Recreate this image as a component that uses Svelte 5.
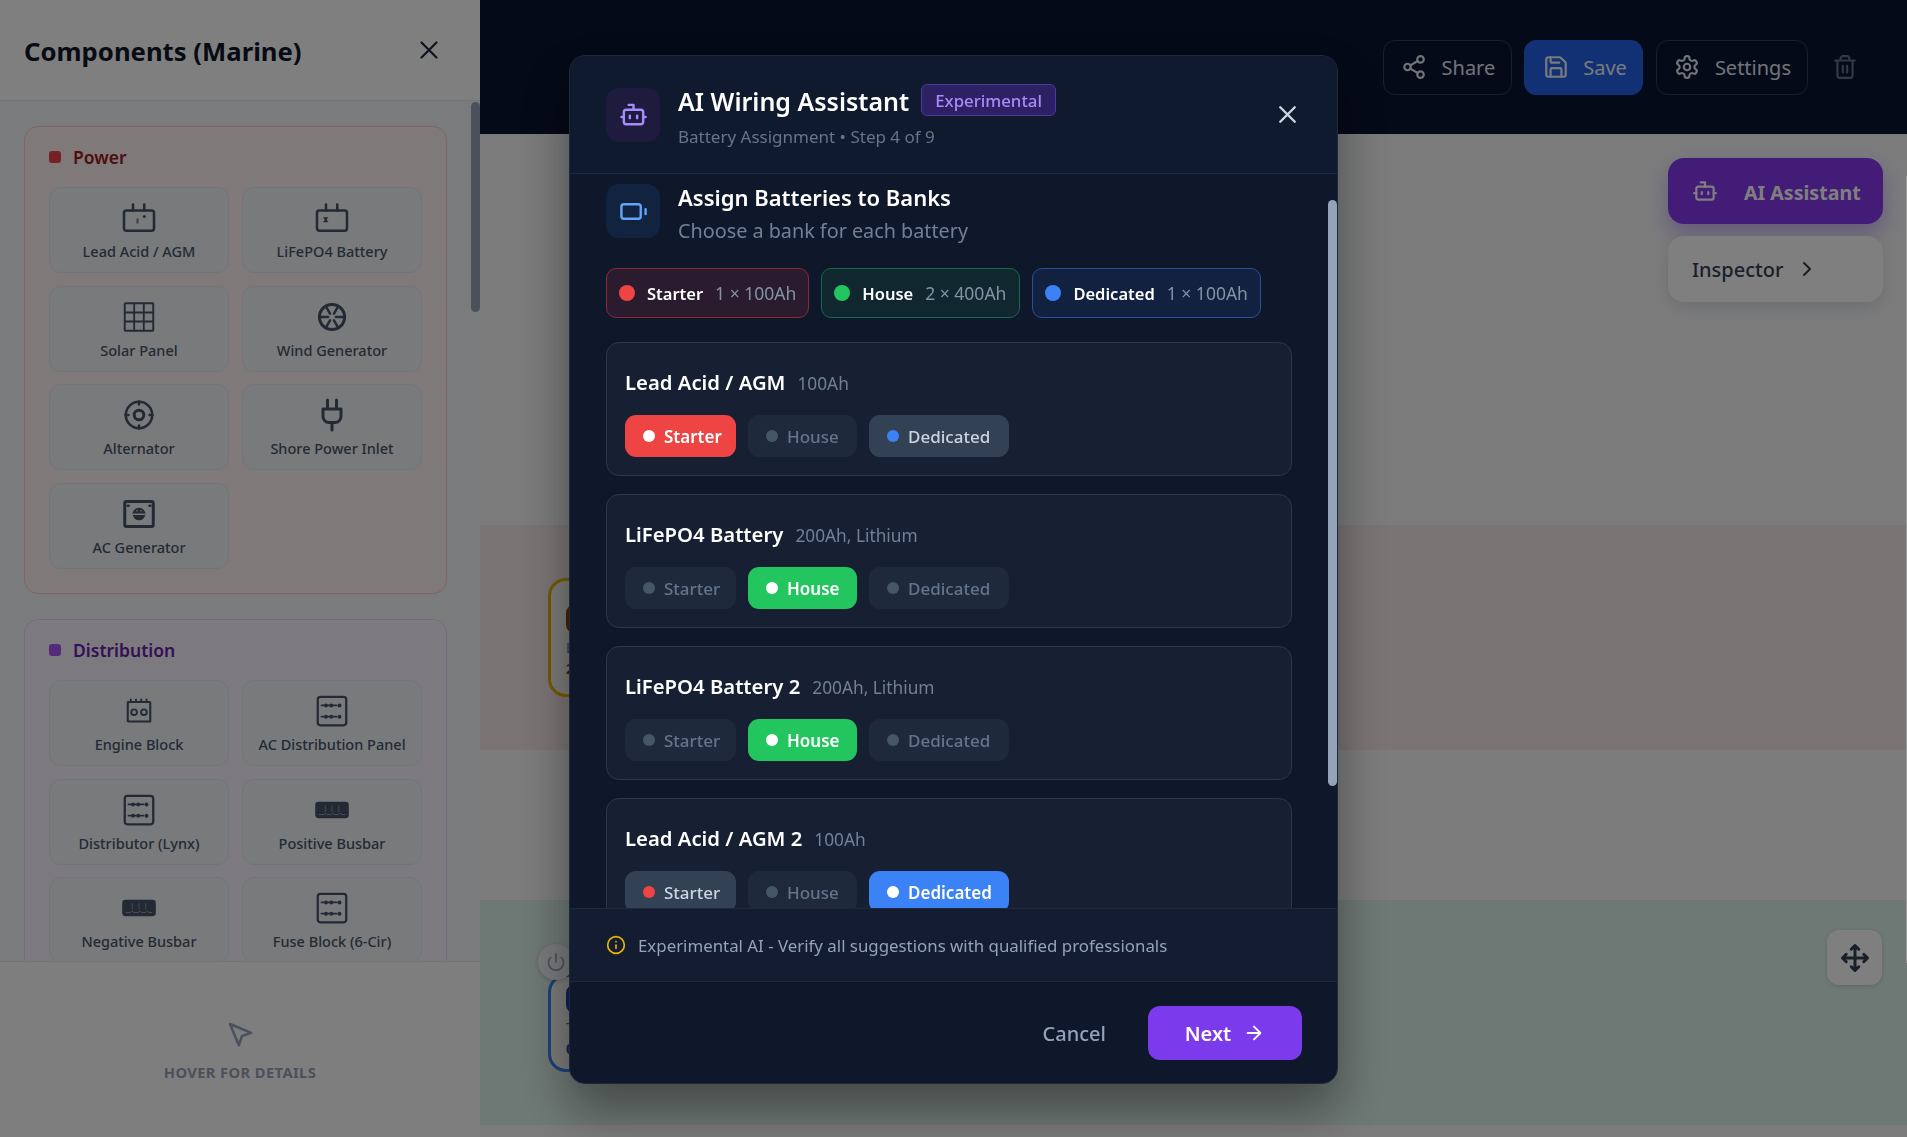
<script lang="ts">
    const power = [
        { name: 'Lead Acid / AGM', icon: 'lead' },
        { name: 'LiFePO4 Battery', icon: 'lifepo' },
        { name: 'Solar Panel', icon: 'solar' },
        { name: 'Wind Generator', icon: 'wind' },
        { name: 'Alternator', icon: 'alternator' },
        { name: 'Shore Power Inlet', icon: 'plug' },
        { name: 'AC Generator', icon: 'acgen' }
    ];
    const distribution = [
        { name: 'Engine Block', icon: 'engine' },
        { name: 'AC Distribution Panel', icon: 'panel' },
        { name: 'Distributor (Lynx)', icon: 'panel' },
        { name: 'Positive Busbar', icon: 'busbar' },
        { name: 'Negative Busbar', icon: 'busbar' },
        { name: 'Fuse Block (6-Cir)', icon: 'panel' }
    ];
    const groups = [
        { title: 'Power', tone: 'red', items: power },
        { title: 'Distribution', tone: 'purple', items: distribution }
    ];
    const summary = [
        { bank: 'starter', label: 'Starter', value: '1 × 100Ah' },
        { bank: 'house', label: 'House', value: '2 × 400Ah' },
        { bank: 'dedicated', label: 'Dedicated', value: '1 × 100Ah' }
    ];
    // "soft" is a bank that can still take this battery, the rest are greyed out
    const batteries = [
        { name: 'Lead Acid / AGM', meta: '100Ah', picked: 'starter', soft: ['dedicated'] },
        { name: 'LiFePO4 Battery', meta: '200Ah, Lithium', picked: 'house', soft: [] },
        { name: 'LiFePO4 Battery 2', meta: '200Ah, Lithium', picked: 'house', soft: [] },
        { name: 'Lead Acid / AGM 2', meta: '100Ah', picked: 'dedicated', soft: ['starter'] }
    ];
    const wheel = [0, 60, 120, 180, 240, 300];
</script>

{#snippet tileIcon(icon: string)}
    <svg class="tile-icon" viewBox="0 0 24 24" fill="none" stroke="currentColor" stroke-width="1.7" stroke-linecap="round" stroke-linejoin="round">
        {#if icon === 'lead'}
            <rect x="2" y="7" width="20" height="13.5" rx="1.6" />
            <path d="M8 7V3M15.5 7V3" />
            <circle cx="15.5" cy="11" r="1" fill="currentColor" stroke="none" />
            <path d="M11 13v2" opacity="0.6" />
        {:else if icon === 'lifepo'}
            <rect x="2" y="7" width="20" height="13.5" rx="1.6" />
            <path d="M8 7V3M15.5 7V3" />
            <path d="M6 11.5h3.6l-1.2 1.7 1.2 1.7H6l1.2-1.7z" fill="currentColor" stroke="none" />
        {:else if icon === 'solar'}
            <rect x="2.5" y="2.8" width="19" height="18.4" rx="0.6" stroke-width="1.3" />
            <path d="M8.8 3v18M15.2 3v18M3 9h18M3 15h18" stroke-width="1.2" />
        {:else if icon === 'wind'}
            <circle cx="12" cy="12" r="8.4" stroke-width="2" />
            {#each wheel as angle}
                <path d="M12 9.4V4" transform="rotate({angle + 30} 12 12)" stroke-width="1.6" />
            {/each}
        {:else if icon === 'alternator'}
            <circle cx="12" cy="12" r="8.8" />
            <circle cx="12" cy="12" r="3.2" stroke-width="2" />
            <path d="M12 3v2M12 19v2M3 12h2M19 12h2" />
        {:else if icon === 'plug'}
            <path d="M12 22v-5M9 8V2M15 8V2M18 8v5a4 4 0 0 1-4 4h-4a4 4 0 0 1-4-4V8Z" stroke-width="2" />
        {:else if icon === 'acgen'}
            <rect x="2.5" y="3.6" width="19" height="16.8" rx="1.2" stroke-width="2" />
            <circle cx="12" cy="12" r="4.2" fill="currentColor" stroke="none" />
            <path d="M8.4 12.2h7.2M10.6 9.8h.01M13.4 9.8h.01" stroke="#f1f5f9" stroke-width="1" />
            <path d="M4.5 6.5h.6M19 6.5h.6" />
        {:else if icon === 'engine'}
            <rect x="4.5" y="6" width="15" height="13" rx="0.4" stroke-width="1.4" />
            <path d="M6.5 6V4.2M10 6V4.2M13.5 6V4.2M17 6V4.2" stroke-width="1.2" />
            <circle cx="8.7" cy="12.8" r="1.9" stroke-width="1.3" />
            <circle cx="15.3" cy="12.8" r="1.9" stroke-width="1.3" />
        {:else if icon === 'panel'}
            <rect x="2.5" y="2.5" width="19" height="19" rx="1.8" stroke-width="1.5" />
            <path d="M5 8.3h10M5 15.8h10" stroke-width="1.2" />
            <circle cx="8" cy="8.3" r="1.3" fill="currentColor" stroke="none" />
            <circle cx="11.5" cy="8.3" r="1.3" fill="currentColor" stroke="none" />
            <circle cx="17" cy="8.3" r="1.3" fill="currentColor" stroke="none" />
            <circle cx="8" cy="15.8" r="1.3" fill="currentColor" stroke="none" />
            <circle cx="11.5" cy="15.8" r="1.3" fill="currentColor" stroke="none" />
            <circle cx="17" cy="15.8" r="1.3" fill="currentColor" stroke="none" />
        {:else if icon === 'busbar'}
            <rect x="1.5" y="7.2" width="21" height="9.6" rx="1.4" stroke-width="1.4" fill="currentColor" />
            <path d="M3.5 15h3l1-1 1 1h3l1-1 1 1h3l1-1 1 1h2" stroke="#94a3b8" stroke-width="0.6" />
            <path d="M7.5 9v4M12 9v4M16.5 9v4" stroke="#94a3b8" stroke-width="0.5" />
        {/if}
    </svg>
{/snippet}

{#snippet bot()}
    <path d="M12 8V4H8" /><rect x="4" y="8" width="16" height="12" rx="2" /><path d="M2 14h2M20 14h2M15 13v2M9 13v2" />
{/snippet}

<div class="page">
    <aside class="sidebar">
        <header class="side-head">
            <h2>Components (Marine)</h2>
            <svg class="side-close" viewBox="0 0 24 24" fill="none" stroke="currentColor" stroke-width="1.8" stroke-linecap="round"><path d="M18 6 6 18M6 6l12 12" /></svg>
        </header>
        <div class="side-body">
            {#each groups as group}
                <section class="group {group.tone}">
                    <h3><span class="group-dot"></span>{group.title}</h3>
                    <div class="tiles">
                        {#each group.items as item}
                            <div class="tile">
                                {@render tileIcon(item.icon)}
                                <span>{item.name}</span>
                            </div>
                        {/each}
                    </div>
                </section>
            {/each}
            <div class="side-thumb"></div>
        </div>
        <div class="side-foot">
            <svg viewBox="0 0 24 24" fill="none" stroke="currentColor" stroke-width="2" stroke-linecap="round" stroke-linejoin="round"><path d="m4 4 7.07 17 2.51-7.39L21 11.07z" /></svg>
            <span>HOVER FOR DETAILS</span>
        </div>
    </aside>

    <main class="main">
        <div class="topbar">
            <button class="tool">
                <svg viewBox="0 0 24 24"><circle cx="18" cy="5" r="3" /><circle cx="6" cy="12" r="3" /><circle cx="18" cy="19" r="3" /><path d="m8.59 13.51 6.83 3.98M15.41 6.51l-6.82 3.98" /></svg>
                Share
            </button>
            <button class="tool save">
                <svg viewBox="0 0 24 24"><path d="M15.2 3a2 2 0 0 1 1.4.6l3.8 3.8a2 2 0 0 1 .6 1.4V19a2 2 0 0 1-2 2H5a2 2 0 0 1-2-2V5a2 2 0 0 1 2-2z" /><path d="M17 21v-7a1 1 0 0 0-1-1H8a1 1 0 0 0-1 1v7M7 3v4a1 1 0 0 0 1 1h7" /></svg>
                Save
            </button>
            <button class="tool">
                <svg viewBox="0 0 24 24"><path d="M12.22 2h-.44a2 2 0 0 0-2 2v.18a2 2 0 0 1-1 1.73l-.43.25a2 2 0 0 1-2 0l-.15-.08a2 2 0 0 0-2.73.73l-.22.38a2 2 0 0 0 .73 2.73l.15.1a2 2 0 0 1 1 1.72v.51a2 2 0 0 1-1 1.74l-.15.09a2 2 0 0 0-.73 2.73l.22.38a2 2 0 0 0 2.73.73l.15-.08a2 2 0 0 1 2 0l.43.25a2 2 0 0 1 1 1.73V20a2 2 0 0 0 2 2h.44a2 2 0 0 0 2-2v-.18a2 2 0 0 1 1-1.73l.43-.25a2 2 0 0 1 2 0l.15.08a2 2 0 0 0 2.73-.73l.22-.39a2 2 0 0 0-.73-2.73l-.15-.08a2 2 0 0 1-1-1.74v-.5a2 2 0 0 1 1-1.74l.15-.09a2 2 0 0 0 .73-2.73l-.22-.38a2 2 0 0 0-2.73-.73l-.15.08a2 2 0 0 1-2 0l-.43-.25a2 2 0 0 1-1-1.73V4a2 2 0 0 0-2-2z" /><circle cx="12" cy="12" r="3" /></svg>
                Settings
            </button>
            <svg class="trash" viewBox="0 0 24 24" fill="none" stroke="currentColor" stroke-width="2" stroke-linecap="round" stroke-linejoin="round"><path d="M3 6h18M19 6v14c0 1-1 2-2 2H7c-1 0-2-1-2-2V6M8 6V4c0-1 1-2 2-2h4c1 0 2 1 2 2v2M10 11v6M14 11v6" /></svg>
        </div>

        <div class="canvas">
            <div class="band top"></div>
            <div class="band red"></div>
            <div class="band mid"></div>
            <div class="band green"></div>
            <div class="band bottom"></div>

            <div class="node gold">
                <div class="node-icon"></div>
                <small>LiFePO4</small>
                <b>200Ah</b>
            </div>
            <div class="node blue">
                <div class="node-icon"></div>
                <small>Total</small>
                <b>0.0A</b>
            </div>
            <div class="node-power">
                <svg viewBox="0 0 24 24" fill="none" stroke="currentColor" stroke-width="2" stroke-linecap="round"><path d="M12 2v10M18.4 6.6a9 9 0 1 1-12.77.04" /></svg>
            </div>

            <div class="float-col">
                <button class="float ai">
                    <svg viewBox="0 0 24 24" fill="none" stroke="currentColor" stroke-width="2" stroke-linecap="round" stroke-linejoin="round">{@render bot()}</svg>
                    AI Assistant
                </button>
                <button class="float inspector">
                    Inspector
                    <svg viewBox="0 0 24 24" fill="none" stroke="currentColor" stroke-width="2" stroke-linecap="round" stroke-linejoin="round"><path d="m9 18 6-6-6-6" /></svg>
                </button>
            </div>
            <div class="move">
                <svg viewBox="0 0 24 24" fill="none" stroke="currentColor" stroke-width="2.4" stroke-linecap="round" stroke-linejoin="round"><path d="M12 2v20M15 19l-3 3-3-3M19 9l3 3-3 3M2 12h20M5 9l-3 3 3 3M9 5l3-3 3 3" /></svg>
            </div>
        </div>
    </main>

    <div class="overlay">
        <div class="modal">
            <header class="modal-head">
                <div class="icon-box violet">
                    <svg viewBox="0 0 24 24" fill="none" stroke="currentColor" stroke-width="2" stroke-linecap="round" stroke-linejoin="round">{@render bot()}</svg>
                </div>
                <div class="head-text">
                    <div class="head-title">
                        <h1>AI Wiring Assistant</h1>
                        <span class="badge">Experimental</span>
                    </div>
                    <p>Battery Assignment • Step 4 of 9</p>
                </div>
                <svg class="modal-close" viewBox="0 0 24 24" fill="none" stroke="currentColor" stroke-width="2" stroke-linecap="round"><path d="M18 6 6 18M6 6l12 12" /></svg>
            </header>

            <div class="modal-body">
                <div class="step-head">
                    <div class="icon-box blue">
                        <svg viewBox="0 0 24 24" fill="none" stroke="currentColor" stroke-width="2" stroke-linecap="round" stroke-linejoin="round"><rect x="2" y="6" width="16" height="12" rx="2" /><path d="M22 14v-4" /></svg>
                    </div>
                    <div class="step-text">
                        <h2>Assign Batteries to Banks</h2>
                        <p>Choose a bank for each battery</p>
                    </div>
                </div>

                <div class="summary">
                    {#each summary as s}
                        <div class="pill {s.bank}">
                            <span class="pill-dot"></span>
                            <strong>{s.label}</strong>
                            <span class="pill-value">{s.value}</span>
                        </div>
                    {/each}
                </div>

                <div class="cards">
                    {#each batteries as b}
                        <div class="card">
                            <div class="card-title"><strong>{b.name}</strong><span>{b.meta}</span></div>
                            <div class="bank-row">
                                {#each summary as s}
                                    <button class="bank {s.bank}" class:picked={b.picked === s.bank} class:soft={b.soft.includes(s.bank)}>
                                        <span class="bank-dot"></span>
                                        {s.label}
                                    </button>
                                {/each}
                            </div>
                        </div>
                    {/each}
                </div>
                <div class="body-thumb"></div>
            </div>

            <div class="note">
                <svg viewBox="0 0 24 24" fill="none" stroke="currentColor" stroke-width="2" stroke-linecap="round"><circle cx="12" cy="12" r="10" /><path d="M12 16v-4M12 8h.01" /></svg>
                Experimental AI - Verify all suggestions with qualified professionals
            </div>

            <footer class="modal-foot">
                <button class="cancel">Cancel</button>
                <button class="next">
                    Next
                    <svg viewBox="0 0 24 24" fill="none" stroke="currentColor" stroke-width="2" stroke-linecap="round" stroke-linejoin="round"><path d="M5 12h14M12 5l7 7-7 7" /></svg>
                </button>
            </footer>
        </div>
        <div class="edge"></div>
    </div>
</div>

<style>
    :global(body) {
        font-family: "Noto Sans", "Open Sans", sans-serif;
    }
    button {
        font-family: inherit;
        border: none;
        padding: 0;
        cursor: pointer;
    }
    h1, h2, h3, p {
        margin: 0;
    }
    .page {
        position: relative;
        display: flex;
        width: 100%;
        height: 100vh;
        overflow: hidden;
        font-family: "Noto Sans", "Open Sans", sans-serif;
    }

    /* sidebar */
    .sidebar {
        width: 480px;
        flex: none;
        display: flex;
        flex-direction: column;
        background: #fff;
    }
    .side-head {
        height: 101px;
        flex: none;
        box-sizing: border-box;
        display: flex;
        align-items: center;
        justify-content: space-between;
        padding: 0 36px 0 24px;
        border-bottom: 1px solid #e2e8f0;
    }
    .side-head h2 {
        font-size: 25.7px;
        font-weight: 700;
        color: #0f172a;
        margin-top: 2px;
    }
    .side-close {
        width: 30px;
        height: 30px;
        color: #1e293b;
    }
    .side-body {
        position: relative;
        flex: 1;
        min-height: 0;
        overflow: hidden;
        background: #f5f7fa;
        padding: 25px 33px 0 24px;
        display: flex;
        flex-direction: column;
        gap: 25px;
    }
    .side-thumb {
        position: absolute;
        top: 1px;
        right: 0;
        width: 9px;
        height: 210px;
        border-radius: 5px;
        background: #94a3b8;
    }
    .group {
        flex: none;
        border-radius: 14px;
        padding: 19px 24px 24px;
        border: 1px solid;
    }
    .group.red {
        background: #fef2f2;
        border-color: #fecaca;
        color: #991b1b;
    }
    .group.purple {
        background: #faf5ff;
        border-color: #e9d5ff;
        color: #6b21a8;
    }
    .group h3 {
        display: flex;
        align-items: center;
        gap: 12px;
        font-size: 17.5px;
        font-weight: 600;
        line-height: 22px;
        margin-bottom: 19px;
    }
    .group-dot {
        width: 12px;
        height: 12px;
        border-radius: 3px;
    }
    .red .group-dot {
        background: #ef4444;
    }
    .purple .group-dot {
        background: #a855f7;
    }
    .tiles {
        display: grid;
        grid-template-columns: 180px 180px;
        column-gap: 13px;
        row-gap: 12.7px;
        grid-auto-rows: 86px;
    }
    .tile {
        box-sizing: border-box;
        display: flex;
        flex-direction: column;
        align-items: center;
        padding-top: 12px;
        gap: 5px;
        background: #f1f5f9;
        border: 1px solid #e2e8f0;
        border-radius: 12px;
        color: #475569;
    }
    .tile span {
        font-size: 14.5px;
        line-height: 20px;
        font-weight: 500;
    }
    .tile-icon {
        width: 36px;
        height: 36px;
    }
    .side-foot {
        height: 176px;
        flex: none;
        box-sizing: border-box;
        border-top: 1px solid #e2e8f0;
        background: #fcfcfd;
        display: flex;
        flex-direction: column;
        align-items: center;
        padding-top: 57px;
        gap: 13px;
        color: #94a3b8;
    }
    .side-foot svg {
        width: 30px;
        height: 30px;
    }
    .side-foot span {
        font-size: 14.7px;
        font-weight: 700;
        letter-spacing: 0.4px;
    }

    /* toolbar + canvas */
    .main {
        flex: 1;
        min-width: 0;
        display: flex;
        flex-direction: column;
    }
    .topbar {
        height: 134px;
        flex: none;
        box-sizing: border-box;
        background: #0a1430;
        display: flex;
        align-items: center;
        justify-content: flex-end;
        gap: 12.5px;
        padding: 0 49px 0 0;
    }
    .tool {
        height: 55px;
        display: flex;
        align-items: center;
        gap: 14.5px;
        padding: 0 15.5px 0 17.5px;
        background: transparent;
        border: 1px solid #334155;
        border-radius: 12px;
        color: #e2e8f0;
        font-size: 20px;
    }
    .tool.save {
        background: #2563eb;
        border-color: #2563eb;
        color: #f1f5f9;
    }
    .tool svg {
        width: 26px;
        height: 26px;
        fill: none;
        stroke: currentColor;
        stroke-width: 2;
        stroke-linecap: round;
        stroke-linejoin: round;
    }
    .trash {
        width: 26px;
        height: 26px;
        margin-left: 12px;
        color: #64748b;
    }
    .canvas {
        position: relative;
        flex: 1;
        min-height: 0;
        display: flex;
        flex-direction: column;
        background: #f7f8fa;
    }
    .band.top {
        height: 391px;
        background: #f6f7f9;
    }
    .band.red {
        height: 225px;
        background: #f6e9e9;
    }
    .band.mid {
        height: 150px;
        background: #f8f9fb;
    }
    .band.green {
        height: 225px;
        background: #dcf0ea;
    }
    .band.bottom {
        flex: 1;
        background: #f6f7f9;
    }
    .node {
        position: absolute;
        left: 68px;
        width: 150px;
        box-sizing: border-box;
        padding: 24px 0 0 15px;
        border: 3px solid;
        border-radius: 18px;
        background: #f8f8f6;
        display: flex;
        flex-direction: column;
    }
    .node.gold {
        top: 444px;
        height: 119px;
        border-color: #eab308;
        color: #92400e;
    }
    .node.blue {
        top: 840px;
        height: 98px;
        padding-top: 8px;
        border-color: #3b82f6;
        color: #1e40af;
    }
    .node-icon {
        width: 28px;
        height: 28px;
        border: 4px solid currentColor;
        border-radius: 8px;
        box-sizing: border-box;
    }
    .node small {
        font-size: 14px;
        margin-top: 5px;
        color: #64748b;
    }
    .node b {
        font-size: 14px;
        margin-top: 2px;
    }
    .node-power {
        position: absolute;
        left: 58px;
        top: 810px;
        width: 36px;
        height: 36px;
        border-radius: 50%;
        background: #f1f5f9;
        box-shadow: 0 1px 4px rgba(0, 0, 0, 0.2);
        display: flex;
        align-items: center;
        justify-content: center;
        color: #94a3b8;
    }
    .node-power svg {
        width: 20px;
        height: 20px;
    }
    .float-col {
        position: absolute;
        right: 24px;
        top: 24px;
        width: 215px;
        display: flex;
        flex-direction: column;
        gap: 12px;
    }
    .float {
        height: 66px;
        border-radius: 16px;
        display: flex;
        align-items: center;
        font-size: 20px;
    }
    .float.ai {
        padding: 2px 0 0 24px;
        gap: 26px;
        background: #8639f0;
        color: #fff;
        font-size: 19.6px;
        font-weight: 700;
        box-shadow: 0 10px 20px rgba(124, 58, 237, 0.35);
    }
    .float.ai svg {
        width: 26px;
        height: 26px;
        margin-top: -2px;
    }
    .float.inspector {
        padding: 0 0 0 24px;
        gap: 12px;
        background: #fff;
        color: #334155;
        font-weight: 500;
        box-shadow: 0 6px 16px rgba(0, 0, 0, 0.1);
    }
    .float.inspector svg {
        width: 24px;
        height: 24px;
    }
    .move {
        position: absolute;
        right: 25px;
        top: 796px;
        width: 55px;
        height: 55px;
        border-radius: 12px;
        background: #fff;
        box-shadow: 0 1px 4px rgba(0, 0, 0, 0.15);
        display: flex;
        align-items: center;
        justify-content: center;
        color: #334155;
    }
    .move svg {
        width: 30px;
        height: 30px;
    }

    /* modal */
    .overlay {
        position: absolute;
        inset: 0;
        background: rgba(0, 0, 0, 0.5);
        backdrop-filter: blur(0.5px);
        display: flex;
        align-items: center;
        justify-content: center;
    }
    .edge {
        position: absolute;
        right: 0;
        top: 176px;
        width: 1px;
        height: 787px;
        background: #9a9a9a;
    }
    .modal {
        width: 769px;
        height: 1029px;
        margin-top: 2px;
        box-sizing: border-box;
        display: flex;
        flex-direction: column;
        background: #0f172a;
        border: 1px solid #1e293b;
        border-radius: 16px;
        overflow: hidden;
        box-shadow: 0 25px 50px rgba(0, 0, 0, 0.4);
    }
    .modal-head {
        flex: none;
        height: 118px;
        box-sizing: border-box;
        display: flex;
        align-items: center;
        padding: 0 35.5px 0 36px;
        gap: 18px;
        border-bottom: 1px solid #1e293b;
        background: #0f1a2e;
    }
    .icon-box {
        width: 54px;
        height: 54px;
        flex: none;
        border-radius: 13px;
        display: flex;
        align-items: center;
        justify-content: center;
    }
    .icon-box svg {
        width: 29px;
        height: 29px;
    }
    .icon-box.violet {
        background: #1e1b3f;
        color: #a78bfa;
    }
    .icon-box.blue {
        background: #12233f;
        color: #60a5fa;
    }
    .head-text {
        flex: 1;
        margin-top: 3px;
    }
    .head-title {
        display: flex;
        align-items: center;
        gap: 12px;
    }
    .head-title h1 {
        font-size: 25px;
        font-weight: 600;
        color: #fff;
        line-height: 34px;
    }
    .badge {
        box-sizing: border-box;
        height: 32px;
        margin-top: -2px;
        padding: 0 13px;
        display: flex;
        align-items: center;
        font-size: 16.8px;
        font-weight: 500;
        color: #a78bfa;
        background: #2e2163;
        border: 1px solid #4c3a9c;
        border-radius: 6px;
    }
    .head-text p {
        font-size: 17px;
        color: #64748b;
        margin-top: 7px;
    }
    .modal-close {
        width: 29px;
        height: 29px;
        color: #cbd5e1;
    }
    .modal-body {
        position: relative;
        flex: 1;
        min-height: 0;
        overflow: hidden;
        padding: 10px 45px 0 36px;
    }
    .body-thumb {
        position: absolute;
        right: 0;
        top: 26px;
        width: 9px;
        height: 586px;
        border-radius: 5px;
        background: #94a3b8;
    }
    .step-head {
        display: flex;
        gap: 18px;
        align-items: flex-start;
    }
    .step-text {
        margin-top: -2px;
    }
    .step-head h2 {
        font-size: 22px;
        font-weight: 600;
        color: #fff;
        line-height: 30px;
    }
    .step-head p {
        font-size: 19.8px;
        line-height: 27px;
        color: #718096;
        margin-top: 5px;
    }
    .summary {
        display: flex;
        gap: 12px;
        margin-top: 24px;
    }
    .pill {
        box-sizing: border-box;
        height: 50px;
        padding: 0 12px;
        display: flex;
        align-items: center;
        gap: 12px;
        border: 1px solid;
        border-radius: 10px;
    }
    .pill strong {
        color: #fff;
        font-size: 16.5px;
        font-weight: 600;
    }
    .pill-value {
        color: #8492a6;
        font-size: 17.5px;
    }
    .pill-dot {
        width: 16px;
        height: 16px;
        border-radius: 50%;
    }
    .pill.starter {
        background: #2a1c2e;
        border-color: #8b2a35;
    }
    .pill.house {
        background: #11272f;
        border-color: #17694a;
        padding-right: 13px;
    }
    .pill.dedicated {
        background: #12213f;
        border-color: #274f9c;
    }
    .starter .pill-dot {
        background: #ef4444;
    }
    .house .pill-dot {
        background: #22c55e;
    }
    .dedicated .pill-dot {
        background: #3b82f6;
    }
    .cards {
        display: flex;
        flex-direction: column;
        gap: 18px;
        margin-top: 24px;
    }
    .card {
        flex: none;
        box-sizing: border-box;
        height: 134px;
        padding: 24px 18px 0;
        background: #162032;
        border: 1px solid #2b3749;
        border-radius: 13px;
    }
    .card-title {
        display: flex;
        align-items: baseline;
        gap: 12px;
        height: 30px;
        line-height: 30px;
    }
    .card-title strong {
        font-size: 20.3px;
        font-weight: 600;
        color: #fff;
    }
    .card-title span {
        font-size: 17.3px;
        color: #718096;
    }
    .bank-row {
        display: flex;
        gap: 12px;
        margin-top: 18px;
    }
    .bank {
        height: 42px;
        padding: 0 0 0 18px;
        display: flex;
        align-items: center;
        gap: 9px;
        border-radius: 11px;
        background: #1e293b;
        color: #64748b;
        font-size: 17px;
        font-weight: 500;
    }
    .bank.starter {
        width: 111px;
    }
    .bank.house {
        width: 109px;
    }
    .bank.dedicated {
        width: 140px;
    }
    .bank-dot {
        width: 12px;
        height: 12px;
        border-radius: 50%;
        background: #475569;
    }
    .bank.soft {
        background: #334155;
        color: #cbd5e1;
    }
    .bank.soft.starter .bank-dot {
        background: #ef4444;
    }
    .bank.soft.dedicated .bank-dot {
        background: #3b82f6;
    }
    .bank.picked {
        color: #fff;
        font-weight: 600;
    }
    .bank.picked .bank-dot {
        background: #fff;
    }
    .bank.picked.starter {
        background: #ef4444;
    }
    .bank.picked.house {
        background: #22c55e;
    }
    .bank.picked.dedicated {
        background: #3b82f6;
    }
    .note {
        flex: none;
        height: 74px;
        box-sizing: border-box;
        display: flex;
        align-items: center;
        gap: 12px;
        padding: 0 36px;
        border-top: 1px solid #1e293b;
        border-bottom: 1px solid #1e293b;
        background: #131c30;
        color: #94a3b8;
        font-size: 16.85px;
    }
    .note svg {
        width: 20px;
        height: 20px;
        color: #eab308;
    }
    .modal-foot {
        flex: none;
        height: 101px;
        box-sizing: border-box;
        display: flex;
        align-items: flex-start;
        justify-content: flex-end;
        gap: 42px;
        padding: 24px 35px 0 0;
    }
    .cancel {
        height: 54px;
        background: transparent;
        color: #94a3b8;
        font-size: 20px;
        font-weight: 500;
    }
    .next {
        box-sizing: border-box;
        width: 154px;
        height: 54px;
        display: flex;
        align-items: center;
        justify-content: center;
        gap: 12px;
        background: #7c3aed;
        color: #fff;
        border-radius: 12px;
        font-size: 20px;
        font-weight: 600;
    }
    .next svg {
        width: 22px;
        height: 22px;
    }
</style>
